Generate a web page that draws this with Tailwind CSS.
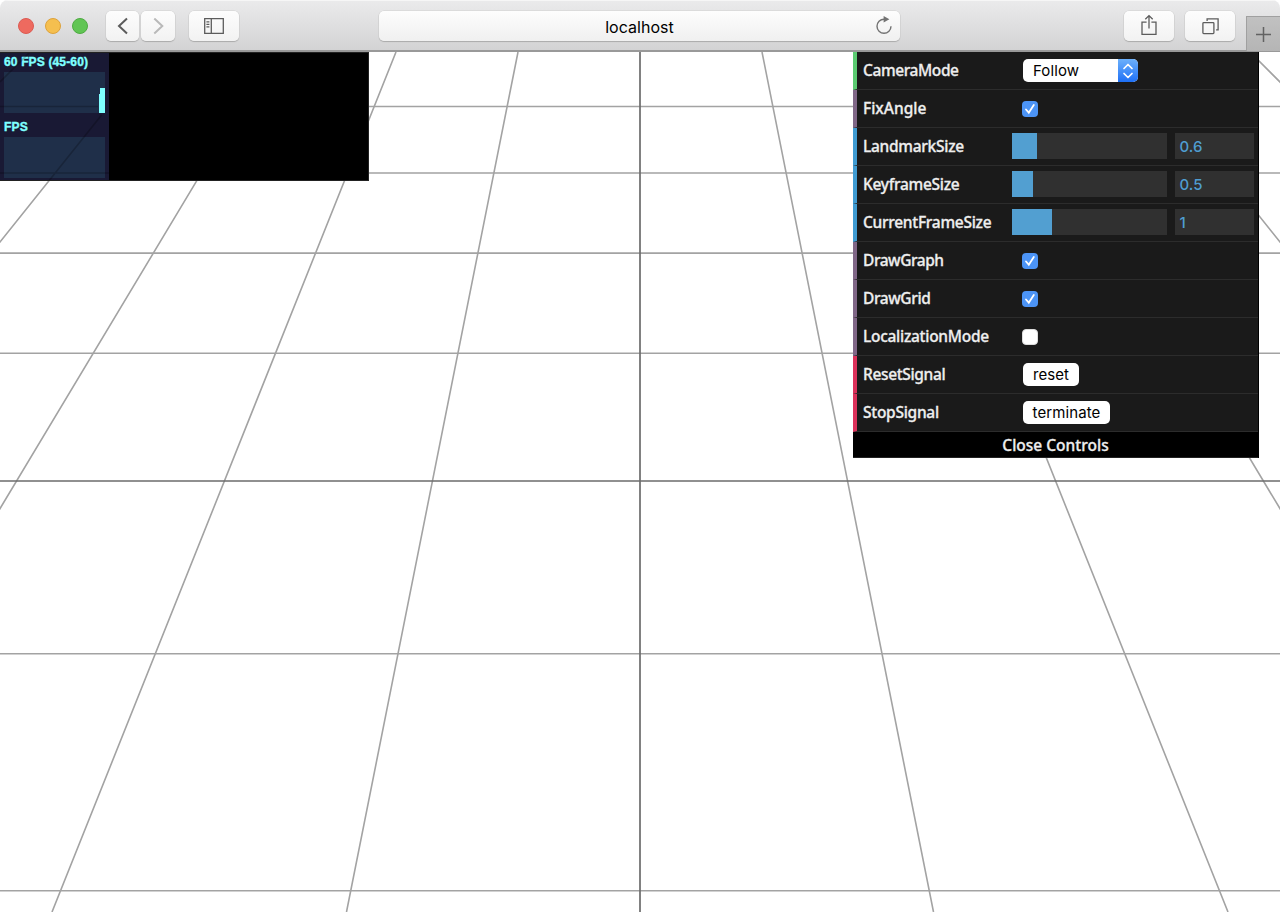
<!DOCTYPE html>
<html lang="en">
<head>
<meta charset="utf-8">
<title>localhost</title>
<script src="https://cdn.jsdelivr.net/npm/@tailwindcss/browser@4"></script>
</head>
<body class="bg-white">
<div class="flex h-[912px] w-[1280px] flex-col overflow-hidden rounded-t-lg bg-white font-['Inter',sans-serif]">
  <header class="relative flex h-[52px] shrink-0 items-start border-b-2 border-[#999] bg-linear-to-b from-[#ebebec] to-[#d3d3d4] pt-[11px] pl-[18px] shadow-[inset_0_1px_0_#f6f6f6]">
    <div class="mt-[7px] flex gap-[11px]">
      <span class="size-4 rounded-full border border-[#dc5b53] bg-[#ee6a5f]"></span>
      <span class="size-4 rounded-full border border-[#dea23a] bg-[#f5bf4f]"></span>
      <span class="size-4 rounded-full border border-[#4eab42] bg-[#61c554]"></span>
    </div>
    <div class="ml-[18px] flex gap-[2px]">
      <button class="flex h-[30px] w-[33px] items-center justify-center rounded-[5px] bg-linear-to-b from-[#fdfdfd] to-[#f2f2f2] shadow-[0_1px_1px_#aaa,0_0_0_.5px_#cfcfcf]">
        <svg class="size-[18px]" viewBox="0 0 18 18" fill="none" stroke="#5c5c5c" stroke-width="2"><path d="M13 1.5 5 9l8 7.5"/></svg>
      </button>
      <button class="flex h-[30px] w-[34px] items-center justify-center rounded-[5px] bg-linear-to-b from-[#fdfdfd] to-[#f2f2f2] shadow-[0_1px_1px_#aaa,0_0_0_.5px_#cfcfcf]">
        <svg class="size-[18px]" viewBox="0 0 18 18" fill="none" stroke="#b9b9b9" stroke-width="2"><path d="m5.3 1.5 8 7.5-8 7.5"/></svg>
      </button>
    </div>
    <button class="ml-[14px] flex h-[30px] w-[50px] items-center justify-center rounded-[5px] bg-linear-to-b from-[#fdfdfd] to-[#f2f2f2] shadow-[0_1px_1px_#aaa,0_0_0_.5px_#cfcfcf]">
      <svg class="h-4 w-5" viewBox="0 0 20 16" fill="none" stroke="#5c5c5c" stroke-width="1.3"><path d="M.7.7h18.6v14.6H.7zM7.3.7v14.6M2.4 3.8h3M2.4 6.3h3M2.4 8.8h3"/></svg>
    </button>
    <div class="relative ml-[140px] flex h-[30px] w-[521px] items-center justify-center rounded-[5px] bg-linear-to-b from-[#fdfdfd] to-[#f0f0f0] text-base text-black shadow-[0_1px_1px_#aaa,0_0_0_.5px_#cfcfcf]">
      <span class="pt-[2px] text-[16px] tracking-[0.04px]">localhost</span>
      <svg class="absolute top-[5px] right-[7px] h-[19px] w-[18px]" viewBox="0 0 18 19" fill="none" stroke="#737373" stroke-width="1.4"><path d="M9 3.2a7 7 0 1 0 7 7"/><path d="M8.6 0v6.6l5.8-3.3z" fill="#737373" stroke="none"/></svg>
    </div>
    <button class="ml-[224px] flex h-[30px] w-[50px] items-center justify-center rounded-[5px] bg-linear-to-b from-[#fdfdfd] to-[#f2f2f2] shadow-[0_1px_1px_#aaa,0_0_0_.5px_#cfcfcf]">
      <svg class="h-[22px] w-4 -translate-y-px" viewBox="0 0 16 22" fill="none" stroke="#5c5c5c" stroke-width="1.3"><path d="M5.6 8.2H1v12.1h14V8.2h-4.6M8 14.6V1.6M4.3 5.3 8 1.6l3.7 3.7"/></svg>
    </button>
    <button class="ml-[11px] flex h-[30px] w-[50px] items-center justify-center rounded-[5px] bg-linear-to-b from-[#fdfdfd] to-[#f2f2f2] shadow-[0_1px_1px_#aaa,0_0_0_.5px_#cfcfcf]">
      <svg class="h-[17px] w-[17px]" viewBox="0 0 17 17" fill="none" stroke="#5c5c5c" stroke-width="1.3"><rect x=".9" y="4.6" width="11" height="11" rx=".8"/><path d="M5.1 2.9V.9h11v11h-2"/></svg>
    </button>
    <div class="absolute top-4 right-0 flex h-[35px] w-[34px] items-center justify-center border-t border-l border-[#a0a0a0] bg-linear-to-b from-[#c1c1c1] to-[#b5b5b5]">
      <svg class="size-[15px]" viewBox="0 0 15 15" stroke="#626262" stroke-width="1.5"><path d="M7.5 0v15M0 7.5h15"/></svg>
    </div>
  </header>

  <main class="relative h-[860px] w-[1280px] overflow-hidden bg-white">
    <svg class="absolute inset-0 h-[860px] w-[1280px]" viewBox="0 52 1280 860" fill="none" stroke="#a3a3a3" stroke-width="1.6">
      <path d="M0 106.5H1280M0 173H1280M0 253.1H1280M0 353.3H1280M0 653.7H1280M0 890.7H1280"/>
      <path d="M518 52 346.5 912M762 52 933.5 912M396 52 52 912M884 52 1228 912M274 52-242 912M1006 52 1522 912M152 52-536 912M1128 52 1816 912M30 52-830 912M1250 52 2110 912"/>
      <path d="M0 481H1280M640 52V912" stroke="#6c6c6c" stroke-width="1.7"/>
    </svg>

    <section class="absolute top-0 left-0 flex h-[129px] w-[369px] border border-[#222] border-l-0 bg-black">
      <div class="absolute inset-y-0 left-0 flex w-[109px] flex-col bg-[#191934] pt-[1px] pl-1 font-['Liberation_Sans',sans-serif] text-[12px] font-bold tracking-[0.15px] text-[#7fffff]">
        <div class="h-[18px] leading-[17px] whitespace-nowrap [-webkit-text-stroke:.4px_#7fffff]">60 FPS (45-60)</div>
        <div class="flex h-[41px] w-[101px] items-end justify-end bg-[#1f2f49]"><span class="h-[19px] w-[1px] bg-[#7fffff]"></span><span class="h-[25px] w-[5px] bg-[#7fffff]"></span></div>
        <div class="h-[24px] pt-[5px] leading-[18px] [-webkit-text-stroke:.4px_#7fffff]">FPS</div>
        <div class="h-[41px] w-[101px] bg-[#1f2f49]"></div>
      </div>
      <svg class="absolute inset-0 h-[127px] w-[109px]" viewBox="0 53 109 127" fill="none" stroke="#000" stroke-opacity=".22" stroke-width="1.6"><path d="M0 106.5H98M0 173H109M101.6 115 49.2 180.5M30 52 0 82"/></svg>
    </section>

    <aside class="absolute top-0 left-[853px] w-[406px] border-r border-black bg-[#1a1a1a] font-['Noto_Sans',sans-serif] text-[15.5px] font-medium tracking-[-0.28px] text-[#eee] [-webkit-text-stroke:.3px_#eee]">
      <div class="flex h-[38px] items-center border-b border-l-4 border-b-[#2c2c2c] border-l-[#5bcb71] pl-[6px]"><span class="w-[160px] tracking-[-0.4px]">CameraMode</span>
        <div class="flex h-[23px] w-[115px] overflow-hidden rounded-[5px] bg-white font-['Inter',sans-serif] text-[15px] font-normal tracking-[0.1px] text-black [-webkit-text-stroke:0]"><span class="flex-1 pl-[10px] leading-[23px]">Follow</span>
          <span class="flex w-5 items-center justify-center bg-linear-to-b from-[#6cb0fb] to-[#1d6ff5]"><svg class="h-4 w-3" viewBox="0 0 12 16" fill="none" stroke="#fff" stroke-width="1.7" stroke-linecap="round" stroke-linejoin="round"><path d="m2 5.5 4-4 4 4M2 10.5l4 4 4-4"/></svg></span>
        </div>
      </div>
      <div class="flex h-[38px] items-center border-b border-l-4 border-b-[#2c2c2c] border-l-[#806787] pl-[6px]"><span class="w-[159px] tracking-normal">FixAngle</span><span class="flex size-4 items-center justify-center rounded-[4px] bg-[#4c94f6]"><svg class="size-3" viewBox="0 0 12 12" fill="none" stroke="#fff" stroke-width="1.8" stroke-linecap="round"><path d="m2 6.5 2.8 3.2L9.8 2"/></svg></span></div>
      <div class="flex h-[38px] items-center border-b border-l-4 border-b-[#2c2c2c] border-l-[#3f9bd2] pl-[6px]"><span class="w-[149px]">LandmarkSize</span><span class="mb-[2px] h-[26px] w-[155px] bg-[#303030]"><span class="block h-full bg-[#529fd1]" style="width:24.5px"></span></span><span class="mb-[2px] ml-2 h-[26px] w-[79px] bg-[#303030] pl-[4.5px] font-['Inter',sans-serif] text-[15px] leading-[27px] font-medium tracking-normal text-[#4f9dd1] [-webkit-text-stroke:0]">0.6</span></div>
      <div class="flex h-[38px] items-center border-b border-l-4 border-b-[#2c2c2c] border-l-[#3f9bd2] pl-[6px]"><span class="w-[149px]">KeyframeSize</span><span class="mb-[2px] h-[26px] w-[155px] bg-[#303030]"><span class="block h-full bg-[#529fd1]" style="width:20.5px"></span></span><span class="mb-[2px] ml-2 h-[26px] w-[79px] bg-[#303030] pl-[4.5px] font-['Inter',sans-serif] text-[15px] leading-[27px] font-medium tracking-normal text-[#4f9dd1] [-webkit-text-stroke:0]">0.5</span></div>
      <div class="flex h-[38px] items-center border-b border-l-4 border-b-[#2c2c2c] border-l-[#3f9bd2] pl-[6px]"><span class="w-[149px]">CurrentFrameSize</span><span class="mb-[2px] h-[26px] w-[155px] bg-[#303030]"><span class="block h-full bg-[#529fd1]" style="width:39.5px"></span></span><span class="mb-[2px] ml-2 h-[26px] w-[79px] bg-[#303030] pl-[4.5px] font-['Inter',sans-serif] text-[15px] leading-[27px] font-medium tracking-normal text-[#4f9dd1] [-webkit-text-stroke:0]">1</span></div>
      <div class="flex h-[38px] items-center border-b border-l-4 border-b-[#2c2c2c] border-l-[#806787] pl-[6px]"><span class="w-[159px] tracking-[-0.45px]">DrawGraph</span><span class="flex size-4 items-center justify-center rounded-[4px] bg-[#4c94f6]"><svg class="size-3" viewBox="0 0 12 12" fill="none" stroke="#fff" stroke-width="1.8" stroke-linecap="round"><path d="m2 6.5 2.8 3.2L9.8 2"/></svg></span></div>
      <div class="flex h-[38px] items-center border-b border-l-4 border-b-[#2c2c2c] border-l-[#806787] pl-[6px]"><span class="w-[159px] tracking-[-0.4px]">DrawGrid</span><span class="flex size-4 items-center justify-center rounded-[4px] bg-[#4c94f6]"><svg class="size-3" viewBox="0 0 12 12" fill="none" stroke="#fff" stroke-width="1.8" stroke-linecap="round"><path d="m2 6.5 2.8 3.2L9.8 2"/></svg></span></div>
      <div class="flex h-[38px] items-center border-b border-l-4 border-b-[#2c2c2c] border-l-[#806787] pl-[6px]"><span class="w-[159px]">LocalizationMode</span><span class="size-4 rounded-[4px] border border-[#ddd] bg-white"></span></div>
      <div class="flex h-[38px] items-center border-b border-l-4 border-b-[#2c2c2c] border-l-[#db315a] pl-[6px]"><span class="w-[160px] tracking-[-0.35px]">ResetSignal</span><button class="h-[23px] w-[56px] rounded-[5px] bg-white font-['Inter',sans-serif] text-[15px] leading-[23px] font-normal tracking-[0.1px] text-black [-webkit-text-stroke:0]">reset</button></div>
      <div class="flex h-[38px] items-center border-b border-l-4 border-b-[#2c2c2c] border-l-[#db315a] pl-[6px]"><span class="w-[160px]">StopSignal</span><button class="h-[23px] w-[87px] rounded-[5px] bg-white font-['Inter',sans-serif] text-[15px] leading-[23px] font-normal tracking-[0.1px] text-black [-webkit-text-stroke:0]">terminate</button></div>
      <div class="h-[26px] border-b border-[#222] bg-black text-center leading-[26px] tracking-normal">Close Controls</div>
    </aside>
  </main>
</div>
</body>
</html>
